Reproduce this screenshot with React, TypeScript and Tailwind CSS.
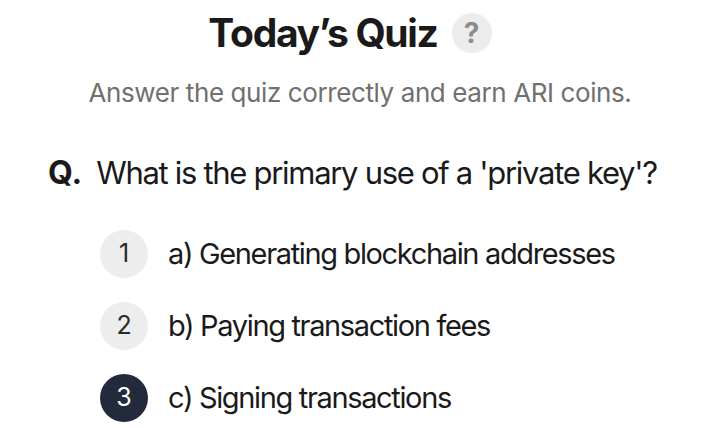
export default function App() {
  const options = [
    { n: 1, text: "a) Generating blockchain addresses", selected: false },
    { n: 2, text: "b) Paying transaction fees", selected: false },
    { n: 3, text: "c) Signing transactions", selected: true },
  ];

  return (
    <div className="w-[720px] h-[428px] bg-white overflow-hidden font-['Inter',sans-serif] text-[#1a1a1a]">
      {/* Header */}
      <div className="flex items-center justify-center gap-[14px] pt-[13px] pr-[20px]">
        <h1 className="text-[39px] leading-[40px] font-bold tracking-[-1.3px]">Today’s Quiz</h1>
        <div className="w-[40px] h-[40px] rounded-full bg-[#ececec] flex items-center justify-center text-[#8c8c8c] text-[28px] font-bold">
          ?
        </div>
      </div>

      <p className="mt-[24px] text-center text-[26px] leading-[32px] text-[#707070] tracking-[-0.4px]">
        Answer the quiz correctly and earn ARI coins.
      </p>

      {/* Question */}
      <div className="mt-[44px] pl-[48px] flex items-center gap-[14px]">
        <span className="text-[32px] leading-[40px] font-bold">Q.</span>
        <span className="text-[31px] leading-[40px] tracking-[-1.3px]">
          What is the primary use of a 'private key'?
        </span>
      </div>

      {/* Options */}
      <div className="mt-[37px] pl-[100px] flex flex-col gap-[24px]">
        {options.map((o) => (
          <div key={o.n} className="flex items-center gap-[20px]">
            <div
              className={
                o.selected
                  ? "w-[48px] h-[48px] rounded-full bg-[#232a3c] text-white flex items-center justify-center text-[25px]"
                  : "w-[48px] h-[48px] rounded-full bg-[#ededed] text-[#2a2a2a] flex items-center justify-center text-[25px]"
              }
            >
              {o.n}
            </div>
            <span className="text-[29px] leading-[40px] tracking-[-1.35px]">{o.text}</span>
          </div>
        ))}
      </div>
    </div>
  );
}
